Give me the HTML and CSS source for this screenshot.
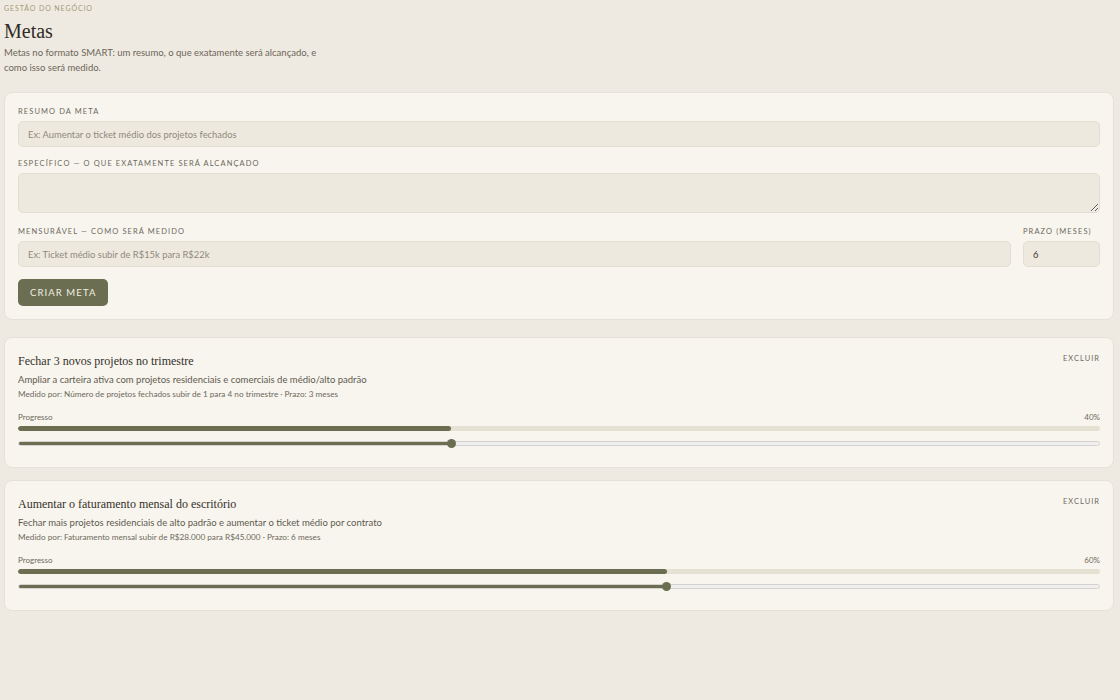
FILE: index.html
```html
<!DOCTYPE html>
<html lang="pt-BR">
<head>
    <meta charset="UTF-8">
    <meta name="viewport" content="width=device-width, initial-scale=1.0">
    <title>Metas</title>
    <link rel="stylesheet" href="styles.css">
</head>
<body>
    <header class="page-head">
        <p class="eyebrow">Gestão do negócio</p>
        <h1>Metas</h1>
        <p class="intro">Metas no formato SMART: um resumo, o que exatamente será alcançado, e como isso será medido.</p>
    </header>

    <form class="card goal-form">
        <label class="field-label" for="resumo">Resumo da meta</label>
        <input class="field" id="resumo" type="text" placeholder="Ex: Aumentar o ticket médio dos projetos fechados">

        <label class="field-label" for="especifico">Específico — o que exatamente será alcançado</label>
        <textarea class="field area" id="especifico"></textarea>

        <div class="row">
            <div class="col grow">
                <label class="field-label" for="mensuravel">Mensurável — como será medido</label>
                <input class="field" id="mensuravel" type="text" placeholder="Ex: Ticket médio subir de R$15k para R$22k">
            </div>
            <div class="col prazo">
                <label class="field-label" for="prazo">Prazo (meses)</label>
                <input class="field" id="prazo" type="number" value="6">
            </div>
        </div>

        <button class="btn" type="button">Criar meta</button>
    </form>

    <section class="card goal">
        <div class="goal-top">
            <h2>Fechar 3 novos projetos no trimestre</h2>
            <button class="link-btn" type="button">Excluir</button>
        </div>
        <p class="goal-desc">Ampliar a carteira ativa com projetos residenciais e comerciais de médio/alto padrão</p>
        <p class="goal-meta">Medido por: Número de projetos fechados subir de 1 para 4 no trimestre · Prazo: 3 meses</p>
        <div class="prog-head"><span>Progresso</span><span>40%</span></div>
        <div class="bar"><div class="bar-fill" style="width: 40%"></div></div>
        <input class="slider" type="range" min="0" max="100" value="40" style="--p: 40%">
    </section>

    <section class="card goal">
        <div class="goal-top">
            <h2>Aumentar o faturamento mensal do escritório</h2>
            <button class="link-btn" type="button">Excluir</button>
        </div>
        <p class="goal-desc">Fechar mais projetos residenciais de alto padrão e aumentar o ticket médio por contrato</p>
        <p class="goal-meta">Medido por: Faturamento mensal subir de R$28.000 para R$45.000 · Prazo: 6 meses</p>
        <div class="prog-head"><span>Progresso</span><span>60%</span></div>
        <div class="bar"><div class="bar-fill" style="width: 60%"></div></div>
        <input class="slider" type="range" min="0" max="100" value="60" style="--p: 60%">
    </section>
</body>
</html>
```

FILE: styles.css
```css
body {
    margin: 0;
    padding: 0 6px 0 4px;
    background: #efeae1;
    font-family: Lato, "Open Sans", sans-serif;
    color: #3b382f;
}

.page-head {
    padding-top: 4px;
    margin-bottom: 17px;
}

.eyebrow {
    margin: 0;
    font-size: 7px;
    line-height: 9px;
    letter-spacing: 0.9px;
    text-transform: uppercase;
    color: #a39a76;
}

h1 {
    margin: 6px 0 2px;
    font-family: "Liberation Serif", serif;
    font-weight: 400;
    font-size: 20px;
    line-height: 24px;
    color: #2f2c25;
}

.intro {
    margin: 0;
    max-width: 318px;
    font-size: 9.5px;
    line-height: 15px;
    color: #6b665a;
}

.card {
    background: #f8f5ee;
    border: 1px solid #e6e1d6;
    border-radius: 8px;
    padding: 13px;
    box-sizing: border-box;
}

.goal-form {
    display: flex;
    flex-direction: column;
    margin-bottom: 17px;
}

.field-label {
    display: block;
    font-size: 7.5px;
    letter-spacing: 1.1px;
    text-transform: uppercase;
    color: #6d695d;
    margin: 1px 0 5px;
}

.field {
    box-sizing: border-box;
    width: 100%;
    height: 26px;
    padding: 0 9px;
    background: #eee9df;
    border: 1px solid #e3ded3;
    border-radius: 5px;
    font-family: inherit;
    font-size: 9.4px;
    color: #3b382f;
    outline: none;
    margin-bottom: 11px;
}

.field::placeholder {
    color: #8e897c;
}

.area {
    height: 40px;
    padding-top: 6px;
    resize: vertical;
    margin-bottom: 13px;
}

.row {
    display: flex;
    gap: 12px;
}

.grow {
    flex: 1;
}

.prazo {
    width: 77px;
}

.btn {
    align-self: flex-start;
    height: 27px;
    margin-top: 1px;
    padding: 0 12px;
    background: #6b6e50;
    border: none;
    border-radius: 5px;
    color: #f2efe4;
    font-family: inherit;
    font-size: 9.5px;
    letter-spacing: 1.1px;
    text-transform: uppercase;
    cursor: pointer;
}

.goal {
    padding: 13px 13px 21px;
    margin-bottom: 12px;
}

.goal-top {
    display: flex;
    justify-content: space-between;
    align-items: flex-start;
}

.goal h2 {
    margin: 3px 0 0;
    font-family: "Liberation Serif", serif;
    font-weight: 400;
    font-size: 12px;
    color: #34312a;
}

.link-btn {
    background: none;
    border: none;
    padding: 0;
    margin-top: 3px;
    font-family: inherit;
    font-size: 7.5px;
    letter-spacing: 1px;
    text-transform: uppercase;
    color: #6d695d;
    cursor: pointer;
}

.goal-desc {
    margin: 4px 0 2px;
    font-size: 9.5px;
    line-height: 14px;
    color: #5f5a4e;
}

.goal-meta {
    margin: 0 0 12px;
    font-size: 8.2px;
    line-height: 11px;
    color: #6d695d;
}

.prog-head {
    display: flex;
    justify-content: space-between;
    font-size: 8px;
    color: #6d695d;
    margin-bottom: 4px;
}

.bar {
    height: 5px;
    border-radius: 3px;
    background: #e6e2d3;
    overflow: hidden;
}

.bar-fill {
    height: 100%;
    background: #6b6e50;
    border-radius: 3px;
}

.slider {
    -webkit-appearance: none;
    appearance: none;
    display: block;
    width: 100%;
    height: 5px;
    margin: 10px 0 0;
    border: 1px solid #d4d3d0;
    border-radius: 3px;
    box-sizing: border-box;
    background: linear-gradient(to right, #6b6e50 var(--p), #efefef var(--p));
}

.slider::-webkit-slider-thumb {
    -webkit-appearance: none;
    width: 9px;
    height: 9px;
    border-radius: 50%;
    background: #6b6e50;
}
```
